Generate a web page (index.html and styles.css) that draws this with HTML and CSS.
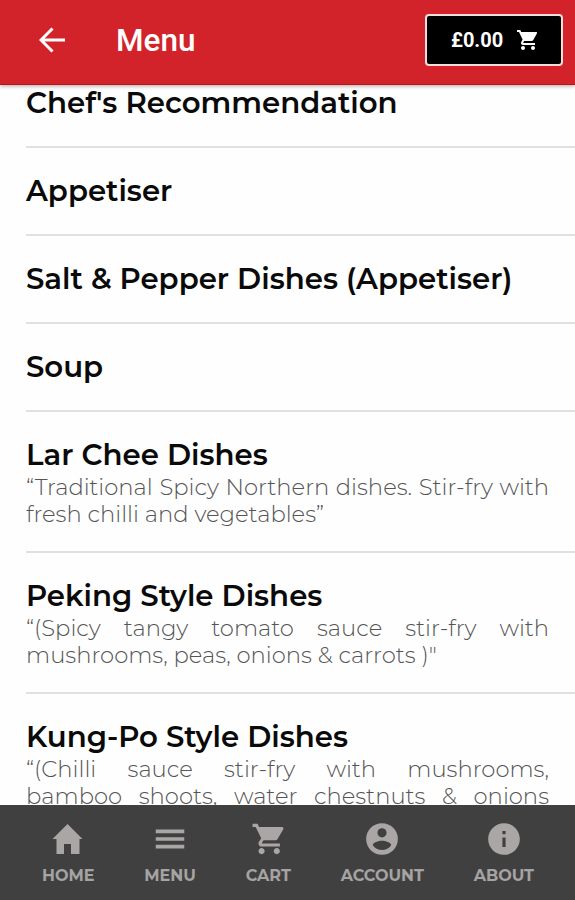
FILE: index.html
```html
<!DOCTYPE html>
<html lang="en">
<head>
    <meta charset="UTF-8">
    <meta name="viewport" content="width=device-width, initial-scale=1.0">
    <title>Menu</title>
    <link rel="stylesheet" href="styles.css">
</head>
<body>
    <header class="topbar">
        <a class="back" href="#" aria-label="Back">
            <svg viewBox="0 0 26 26"><path d="M13.5 1.5 2 13l11.5 11.5M2 13h24"/></svg>
        </a>
        <h1>Menu</h1>
        <button class="basket">
            <span>£0.00</span>
            <svg viewBox="0 0 24 24"><path d="M7 18c-1.1 0-1.99.9-1.99 2S5.9 22 7 22s2-.9 2-2-.9-2-2-2zM1 2v2h2l3.6 7.59-1.35 2.45c-.16.28-.25.61-.25.96 0 1.1.9 2 2 2h12v-2H7.42c-.14 0-.25-.11-.25-.25l.03-.12.9-1.63h7.45c.75 0 1.41-.41 1.75-1.03l3.58-6.49A1 1 0 0 0 20 4H5.21l-.94-2H1zm16 16c-1.1 0-1.99.9-1.99 2s.89 2 1.99 2 2-.9 2-2-.9-2-2-2z"/></svg>
        </button>
    </header>

    <main class="menu">
        <section class="item first">
            <h2>Chef's Recommendation</h2>
        </section>
        <section class="item">
            <h2>Appetiser</h2>
        </section>
        <section class="item">
            <h2>Salt &amp; Pepper Dishes (Appetiser)</h2>
        </section>
        <section class="item">
            <h2>Soup</h2>
        </section>
        <section class="item">
            <h2>Lar Chee Dishes</h2>
            <p>“Traditional Spicy Northern dishes. Stir-fry with fresh chilli and vegetables”</p>
        </section>
        <section class="item">
            <h2>Peking Style Dishes</h2>
            <p>“(Spicy tangy tomato sauce stir-fry with mushrooms, peas, onions &amp; carrots )"</p>
        </section>
        <section class="item">
            <h2>Kung-Po Style Dishes</h2>
            <p class="full">“(Chilli sauce stir-fry with mushrooms, bamboo shoots, water chestnuts &amp; onions</p>
        </section>
    </main>

    <nav class="tabs">
        <a class="tab" href="#">
            <svg viewBox="0 0 38 38"><path d="M18.500 4 33.500 19h-3v15H22V24h-7v10H7.500V19h-4z"/></svg>
            <span>HOME</span>
        </a>
        <a class="tab" href="#">
            <svg viewBox="0 0 512 512"><path d="M64 384h384v-50H64zm0-103h384v-50H64zM64 128v50h384v-50z"/></svg>
            <span>MENU</span>
        </a>
        <a class="tab" href="#">
            <svg viewBox="0 0 512 512"><path d="M169.600 377.600c-22.900 0-41.600 18.700-41.600 41.600s18.700 41.600 41.600 41.600 41.600-18.700 41.600-41.600-18.700-41.600-41.600-41.600zM48 51.200v41.600h41.600l74.900 151.700-31.300 51c-3.100 5.200-5.200 12.500-5.200 19.700 0 27.900 19 41.600 44.800 41.600H416v-40H177.900c-3.100 0-5.200-2.100-5.200-5.200 0-1 2.200-5.200 2.200-5.200l20.800-32.800h155c15.600 0 29.100-8.300 36.400-21.800l74.800-128.800c1.300-2.500 2.100-6.200 2.100-10.400 0-11.400-9.400-19.800-20.800-19.800H135.400L115.600 51.200zm326.400 326.400c-22.900 0-41.600 18.700-41.600 41.600s18.700 41.600 41.600 41.600 41.600-18.700 41.600-41.600-18.700-41.600-41.600-41.600z"/></svg>
            <span>CART</span>
        </a>
        <a class="tab" href="#">
            <svg viewBox="0 0 24 24">
                <circle cx="12" cy="12" r="10"/>
                <circle class="cut" cx="12" cy="8.100" r="2.900"/>
                <path class="cut" d="M6.200 16c0-1.900 3.800-2.900 5.800-2.900s5.800 1 5.800 2.900c-1.200 1.900-3.400 3-5.800 3s-4.600-1.100-5.800-3z"/>
            </svg>
            <span>ACCOUNT</span>
        </a>
        <a class="tab" href="#">
            <svg viewBox="0 0 24 24"><path d="M12 2C6.480 2 2 6.480 2 12s4.480 10 10 10 10-4.480 10-10S17.520 2 12 2zm1 15h-2v-6h2v6zm0-8h-2V7h2v2z"/></svg>
            <span>ABOUT</span>
        </a>
    </nav>
</body>
</html>
```
FILE: styles.css
```css
* {
    box-sizing: border-box;
}
body {
    margin: 0;
    height: 900px;
    display: flex;
    flex-direction: column;
    overflow: hidden;
    font-family: Montserrat, Inter, sans-serif;
    background-color: #fefefe;
}
a {
    text-decoration: none;
}
.topbar {
    flex: none;
    display: flex;
    align-items: center;
    height: 85px;
    padding: 0 12px 4px 39px;
    background-color: #d2232a;
    border-bottom: 1px solid #bd1218;
    box-shadow: 0 1px 4px rgba(0, 0, 0, 0.35);
    z-index: 1;
}
.back svg {
    display: block;
    width: 26px;
    height: 26px;
    fill: none;
    stroke: #fff;
    stroke-width: 3;
}
.topbar h1 {
    margin: 0 auto 0 51px;
    padding-top: 2px;
    font: 500 31.5px/40px Roboto, sans-serif;
    color: #fff;
}
.basket {
    display: flex;
    align-items: center;
    justify-content: space-between;
    width: 138px;
    height: 52px;
    padding: 0 21px 0 24px;
    border: 2px solid #f8dcdc;
    border-radius: 4px;
    background-color: #000;
    color: #fff;
    font: 700 20px Roboto, sans-serif;
}
.basket svg {
    width: 24px;
    height: 24px;
    fill: #fff;
}
.menu {
    flex: 1;
    min-height: 0;
    overflow: hidden;
    padding-left: 26px;
}
.item {
    padding: 25px 26px 25px 0;
    border-bottom: 2px solid #e0e0e0;
}
.item.first {
    padding-top: 0;
}
.item h2 {
    margin: 0;
    font-size: 29.2px;
    font-weight: 600;
    line-height: 36px;
    color: #0a0a0a;
    white-space: nowrap;
}
.item p {
    margin: 1px 0 -1px;
    font-size: 22.7px;
    font-weight: 300;
    line-height: 26.5px;
    text-align: justify;
    color: #555;
}
.item p.full {
    text-align-last: justify;
}
.tabs {
    flex: none;
    display: flex;
    justify-content: space-between;
    height: 95px;
    padding: 15px 41px 0 42px;
    background-color: #404040;
}
.tab {
    display: flex;
    flex-direction: column;
    align-items: center;
    font-size: 16px;
    font-weight: 700;
    line-height: 22px;
    color: #a6a3a3;
}
.tab svg {
    width: 38px;
    height: 38px;
    margin-bottom: 7px;
    fill: #aaa6a6;
}
.tab .cut {
    fill: #404040;
}
```
